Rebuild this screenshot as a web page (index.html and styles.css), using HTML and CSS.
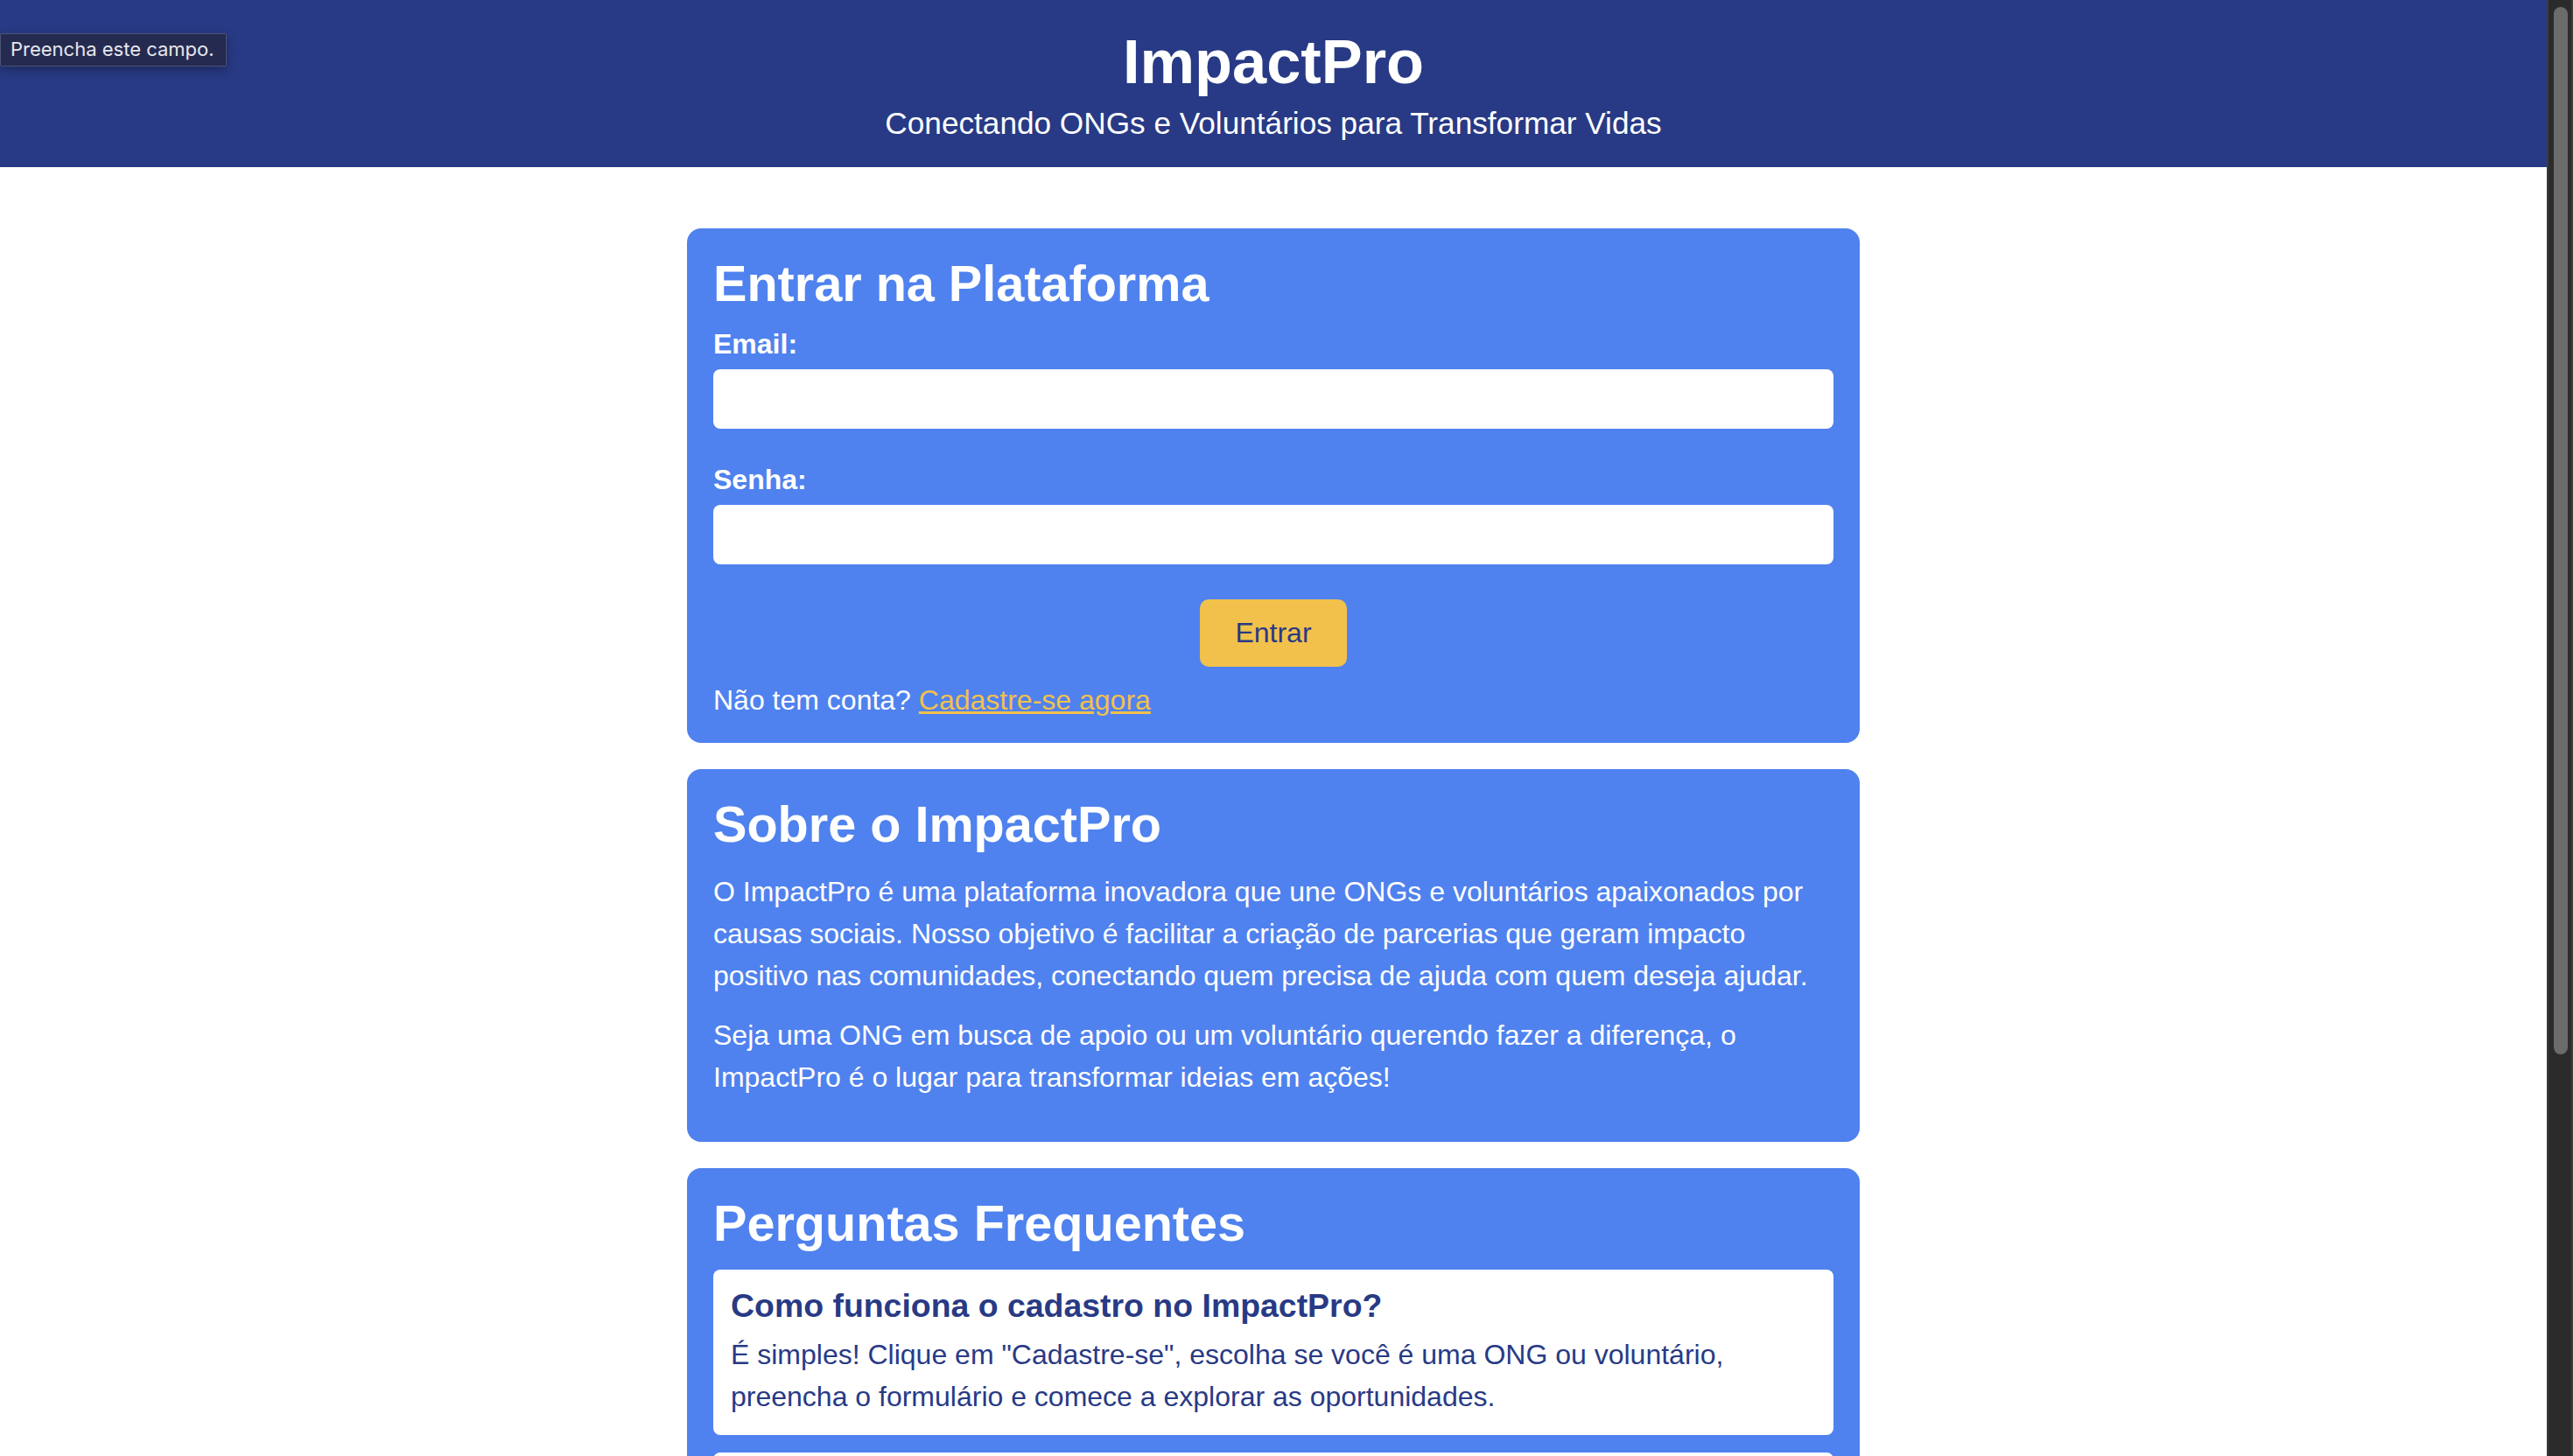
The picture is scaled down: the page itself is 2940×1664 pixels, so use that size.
FILE: index.html
```html
<!DOCTYPE html>
<html lang="pt-BR">
<head>
<meta charset="utf-8">
<title>ImpactPro</title>
<link rel="stylesheet" href="styles.css">
</head>
<body>
<div class="viewport">
  <div class="page">
    <header class="site-header">
      <h1>ImpactPro</h1>
      <p>Conectando ONGs e Voluntários para Transformar Vidas</p>
    </header>
    <main class="container">
      <section class="card card-login">
        <h2>Entrar na Plataforma</h2>
        <form class="login-form">
          <div class="form-group">
            <label for="email">Email:</label>
            <input id="email" type="email" required>
          </div>
          <div class="form-group">
            <label for="senha">Senha:</label>
            <input id="senha" type="password" required>
          </div>
          <div class="actions"><button type="submit">Entrar</button></div>
          <p class="signup">Não tem conta? <a href="#">Cadastre-se agora</a></p>
        </form>
      </section>
      <section class="card card-about">
        <h2>Sobre o ImpactPro</h2>
        <p>O ImpactPro é uma plataforma inovadora que une ONGs e voluntários apaixonados por causas sociais. Nosso objetivo é facilitar a criação de parcerias que geram impacto positivo nas comunidades, conectando quem precisa de ajuda com quem deseja ajudar.</p>
        <p>Seja uma ONG em busca de apoio ou um voluntário querendo fazer a diferença, o ImpactPro é o lugar para transformar ideias em ações!</p>
      </section>
      <section class="card card-faq">
        <h2>Perguntas Frequentes</h2>
        <div class="faq-item">
          <h3>Como funciona o cadastro no ImpactPro?</h3>
          <p>É simples! Clique em "Cadastre-se", escolha se você é uma ONG ou voluntário, preencha o formulário e comece a explorar as oportunidades.</p>
        </div>
        <div class="faq-item">
          <h3>O ImpactPro é gratuito?</h3>
          <p>Sim! A plataforma é totalmente gratuita para ONGs e voluntários.</p>
        </div>
        <div class="faq-item">
          <h3>Como encontro oportunidades de voluntariado?</h3>
          <p>Após o cadastro, você pode buscar projetos por causa, localização e disponibilidade.</p>
        </div>
      </section>
    </main>
    <div class="tooltip">Preencha este campo.</div>
  </div>
  <div class="scrollbar"><div class="thumb"></div></div>
</div>
</body>
</html>
```

FILE: styles.css
```css
* {
  box-sizing: border-box;
}

html,
body {
  margin: 0;
  height: 100%;
  overflow: hidden;
}

body {
  font-family: "Liberation Sans", Arial, sans-serif;
  font-size: 32px;
  background: #ffffff;
  color: #ffffff;
}

.viewport {
  display: flex;
  height: 100vh;
}

.page {
  flex: 1;
  min-width: 0;
  position: relative;
  overflow: hidden;
  background: #ffffff;
}

/* Header */
.site-header {
  background: #283a85;
  color: #ffffff;
  text-align: center;
  padding: 30px 0;
}

.site-header h1 {
  margin: 0;
  font-size: 70.4px;
  font-weight: 700;
  line-height: normal;
}

.site-header p {
  margin: 10px 0 0;
  font-size: 35.2px;
  line-height: normal;
}

/* Content */
.container {
  max-width: 1340px;
  margin: 0 auto;
  padding-top: 70px;
}

.card {
  background: #4f82ee;
  color: #ffffff;
  border-radius: 16px;
  padding: 30px;
  margin-bottom: 30px;
}

.card h2 {
  margin: 0 0 20px;
  font-size: 57.6px;
  font-weight: 700;
  line-height: normal;
}

.card-login h2 {
  margin-bottom: 18px;
}

.form-group {
  margin-bottom: 40px;
}

.form-group label {
  display: block;
  font-weight: 700;
  margin-bottom: 10px;
}

.form-group input {
  display: block;
  width: 100%;
  height: 68px;
  border: 0;
  border-radius: 8px;
  background: #ffffff;
  padding: 0 20px;
  font: inherit;
  color: #283a85;
  outline: none;
}

.actions {
  text-align: center;
}

.actions button {
  background: #f2c14b;
  color: #283a85;
  border: 0;
  border-radius: 10px;
  padding: 20px 40px;
  font: inherit;
  line-height: normal;
}

.signup {
  margin: 20px 0 0;
}

.signup a {
  color: #f2c14b;
}

.card-about p {
  margin: 20px 0;
  line-height: 48px;
}

.faq-item {
  background: #ffffff;
  color: #283a85;
  border-radius: 8px;
  padding: 20px;
  margin-bottom: 20px;
}

.faq-item h3 {
  margin: 0 0 10px;
  font-size: 37.44px;
  font-weight: 700;
  line-height: normal;
}

.faq-item p {
  margin: 0;
  line-height: 48px;
}

/* Validation tooltip */
.tooltip {
  position: absolute;
  left: 0;
  top: 38px;
  height: 38px;
  padding: 0 13px 0 11px;
  background: #252b50;
  border: 1px solid #4d5373;
  border-radius: 2px;
  color: #e6e7ee;
  font-family: Inter, "Liberation Sans", sans-serif;
  font-size: 22px;
  line-height: 35px;
  box-shadow: 0 4px 12px rgba(0, 0, 0, 0.3);
  white-space: nowrap;
}

/* Scrollbar */
.scrollbar {
  flex: 0 0 30px;
  background: #2b2b2b;
  border-left: 2px solid #3c3c3c;
  border-right: 2px solid #3c3c3c;
  padding: 8px 4px 0 6px;
}

.thumb {
  height: 1197px;
  border-radius: 8px;
  background: #6b6b6b;
}
```
